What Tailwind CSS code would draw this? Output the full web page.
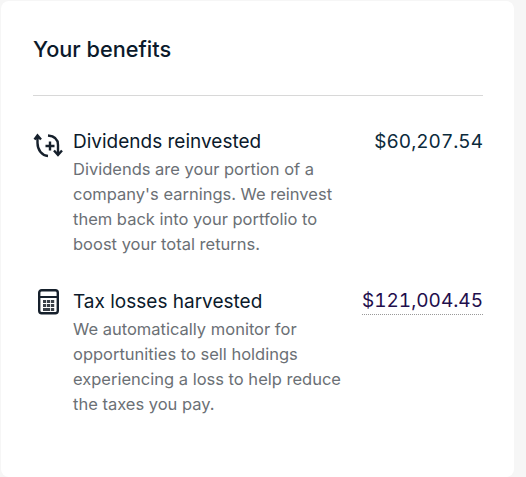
<!DOCTYPE html>
<html lang="en">
<head>
<meta charset="UTF-8">
<title>Your benefits</title>
<script src="https://cdn.jsdelivr.net/npm/@tailwindcss/browser@4"></script>
</head>
<body class="bg-[#f6f6f6] h-[477px] overflow-hidden font-['Inter',sans-serif]">
<div class="bg-white w-[513px] h-[476px] ml-px mt-px rounded-lg pl-8 pr-[31px] pt-8">
  <h2 class="text-[21.7px] leading-8 font-medium text-[#0b1a2b]">Your benefits</h2>
  <div class="mt-[30px] border-t border-[#d8d8d8]"></div>
  <div class="mt-[31px] flex">
    <svg class="w-8 h-8 mt-[3px] mr-2 shrink-0" viewBox="0 0 32 32" fill="none" stroke="#16202c" stroke-width="2.4"><path d="M1.5 9.5L4.5 5.5L8 9.5M4.5 6V13C4.5 20 9 25.5 15 26M15 5.5C21 6 25 9 25 15V24M21 20.5L25 25L29 20.5M17 11.5V20.5M12.5 16H21.5"/></svg>
    <div class="w-[270px]">
      <div class="text-[19px] leading-[30px] text-[#0b1a2b]">Dividends reinvested</div>
      <p class="text-[16.5px] leading-[25px] text-[#6b7075]">Dividends are your portion of a company's earnings. We reinvest them back into your portfolio to boost your total returns.</p>
    </div>
    <div class="ml-auto text-[19px] leading-[30px] tabular-nums text-[#0b2a3b]">$60,207.54</div>
  </div>
  <div class="mt-[30px] flex">
    <svg class="w-8 h-8 mr-2 shrink-0" viewBox="0 0 32 32"><rect x="6.2" y="3.2" width="18.6" height="23" rx="2.5" fill="#fff" stroke="#16202c" stroke-width="2.4"/><path d="M6 10H25" stroke="#16202c" stroke-width="2"/><g fill="#3a4048"><rect x="10" y="13" width="3.2" height="3"/><rect x="14" y="13" width="3.2" height="3"/><rect x="18" y="13" width="3.2" height="3"/><rect x="10" y="17" width="3.2" height="3"/><rect x="14" y="17" width="3.2" height="3"/><rect x="18" y="17" width="3.2" height="3"/><rect x="10" y="21" width="7.2" height="3"/><rect x="18" y="21" width="3.2" height="3"/></g></svg>
    <div class="w-[270px]">
      <div class="text-[19px] leading-[30px] text-[#0b1a2b]">Tax losses harvested</div>
      <p class="text-[16.5px] leading-[25px] text-[#6b7075]">We automatically monitor for opportunities to sell holdings experiencing a loss to help reduce the taxes you pay.</p>
    </div>
    <div class="ml-auto self-start text-[19px] leading-[27px] h-[28px] tabular-nums text-[#1f0f4d] border-b border-dotted border-[#999]">$121,004.45</div>
  </div>
</div>
</body>
</html>
